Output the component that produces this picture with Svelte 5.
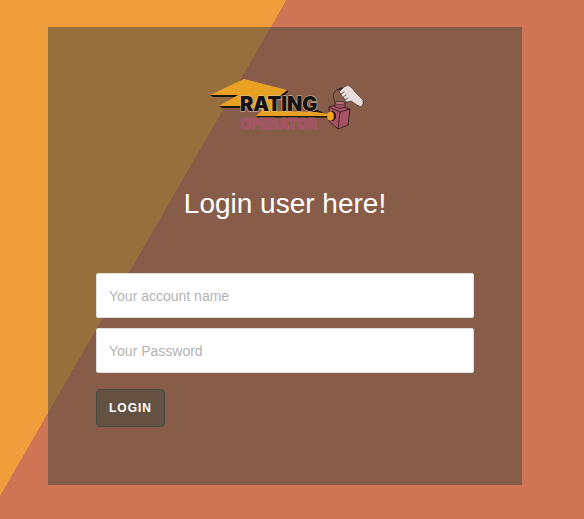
<script>
  let account = $state('');
  let password = $state('');

  function submit(event) {
    event.preventDefault();
  }
</script>

<main class="page">
  <section class="panel">
    <svg class="logo" viewBox="206 78 158 52" role="img" aria-label="Rating Operator">
      <!-- lightning bolt with its dark lower edge -->
      <g fill="#1b1410">
        <path d="M210 95 L213 97 L237 97 L240 95Z" />
        <path d="M219 106 L222 108 L241 108 L241 106Z" />
        <path d="M288 90 L278 97 L275 100 L280 99 L288 92Z" />
        <path d="M256 116 L258 117.5 L328 117.5 L328 115 L317 110 L300 114Z" />
      </g>
      <path fill="#e8a123" d="M210 95 L244 79 L287 90 L276 99 L277 111 L316 112 L328 114 L328 116 L256 116 L262 110 L241 106 L219 106 L238 95Z" />

      <!-- lantern handle and hand -->
      <path d="M336 104 Q332 97 334 93 Q336 89 341 88" fill="none" stroke="#33221d" stroke-width="0.8" />
      <path d="M345 104 Q347 102 347 100" fill="none" stroke="#33221d" stroke-width="0.8" />
      <path d="M339 92 L344 87 L348 85 L352 88 L355 92 L363 100 L363 104 L361 107 L357 105 L351 101 L347 102 L345 101 L344 98 L342 97 L341 94Z" fill="#e6dcd9" stroke="#33221d" stroke-width="0.6" stroke-linejoin="round" />
      <path d="M341 94 L344 92 M343 97 L346 95 M345 100 L348 98" fill="none" stroke="#33221d" stroke-width="0.7" stroke-linecap="round" />
      <path d="M339 90 L342 88" stroke="#211715" stroke-width="1.2" stroke-linecap="round" />

      <!-- lantern -->
      <path d="M329 107 L335 105 L350 109 L348 125 L338 129 L329 121Z" fill="#a55362" stroke="#2b1b18" stroke-width="0.8" stroke-linejoin="round" />
      <path d="M329 107 L340 112 L350 109 M340 112 L338 129" fill="none" stroke="#2b1b18" stroke-width="0.8" />
      <path d="M335 103 L335 107 Q340 110 345 107 L345 103Z" fill="#a55362" stroke="#2b1b18" stroke-width="0.7" />
      <ellipse cx="340" cy="103" rx="5" ry="1.6" fill="#b5757b" stroke="#2b1b18" stroke-width="0.6" />
      <ellipse cx="332" cy="116" rx="4" ry="5" fill="#211715" />
      <ellipse cx="330.5" cy="116" rx="3.3" ry="4.5" fill="#f0a41f" />

      <text class="rating" x="240" y="111">RATING</text>
      <text class="operator" x="240" y="129">OPERATOR</text>
    </svg>

    <h1>Login user here!</h1>

    <form onsubmit={submit}>
      <input type="text" aria-label="Your account name" placeholder="Your account name" bind:value={account} />
      <input type="password" aria-label="Your Password" placeholder="Your Password" bind:value={password} />
      <button type="submit">Login</button>
    </form>
  </section>
</main>

<style>
  :global(body) {
    margin: 0;
  }

  .page {
    box-sizing: border-box;
    min-height: 100vh;
    padding: 27px 62px 34px 48px;
    background: linear-gradient(120deg, #f09d3b 248px, #ce7555 248px);
    font-family: "Liberation Sans", Arial, sans-serif;
  }

  .panel {
    display: flex;
    flex-direction: column;
    align-items: center;
    padding: 51px 48px 58px;
    background: rgba(76, 73, 63, 0.55);
  }

  .logo {
    display: block;
    width: 158px;
    height: 52px;
    overflow: visible;
  }

  .rating,
  .operator {
    font-family: Inter, "Open Sans", sans-serif;
    font-weight: 900;
    stroke-width: 1px;
    stroke-linejoin: round;
    paint-order: stroke;
  }

  .rating {
    font-size: 20px;
    fill: #17110f;
    stroke: #d9c4ae;
  }

  .operator {
    font-size: 14px;
    fill: #a55362;
    stroke: #a0606a;
  }

  h1 {
    margin: 58px 0 53px;
    color: #fff;
    font-size: 28px;
    font-weight: 400;
    line-height: 32px;
    text-align: center;
  }

  form {
    display: flex;
    flex-direction: column;
    align-items: flex-start;
    gap: 10px;
    width: 100%;
  }

  input {
    box-sizing: border-box;
    width: 100%;
    height: 45px;
    padding: 0 12px;
    border: 1px solid #dde0dc;
    border-radius: 2px;
    background: #fff;
    color: #444;
    font: 14px "Liberation Sans", Arial, sans-serif;
  }

  input::placeholder {
    color: #b3b3b3;
    opacity: 1;
  }

  button {
    box-sizing: border-box;
    height: 38px;
    margin-top: 6px;
    padding: 0 12px;
    border: 1px solid #484a40;
    border-radius: 4px;
    background: #655142;
    color: #fff;
    font: bold 12px "Liberation Sans", Arial, sans-serif;
    letter-spacing: 1px;
    text-transform: uppercase;
    cursor: pointer;
  }
</style>
